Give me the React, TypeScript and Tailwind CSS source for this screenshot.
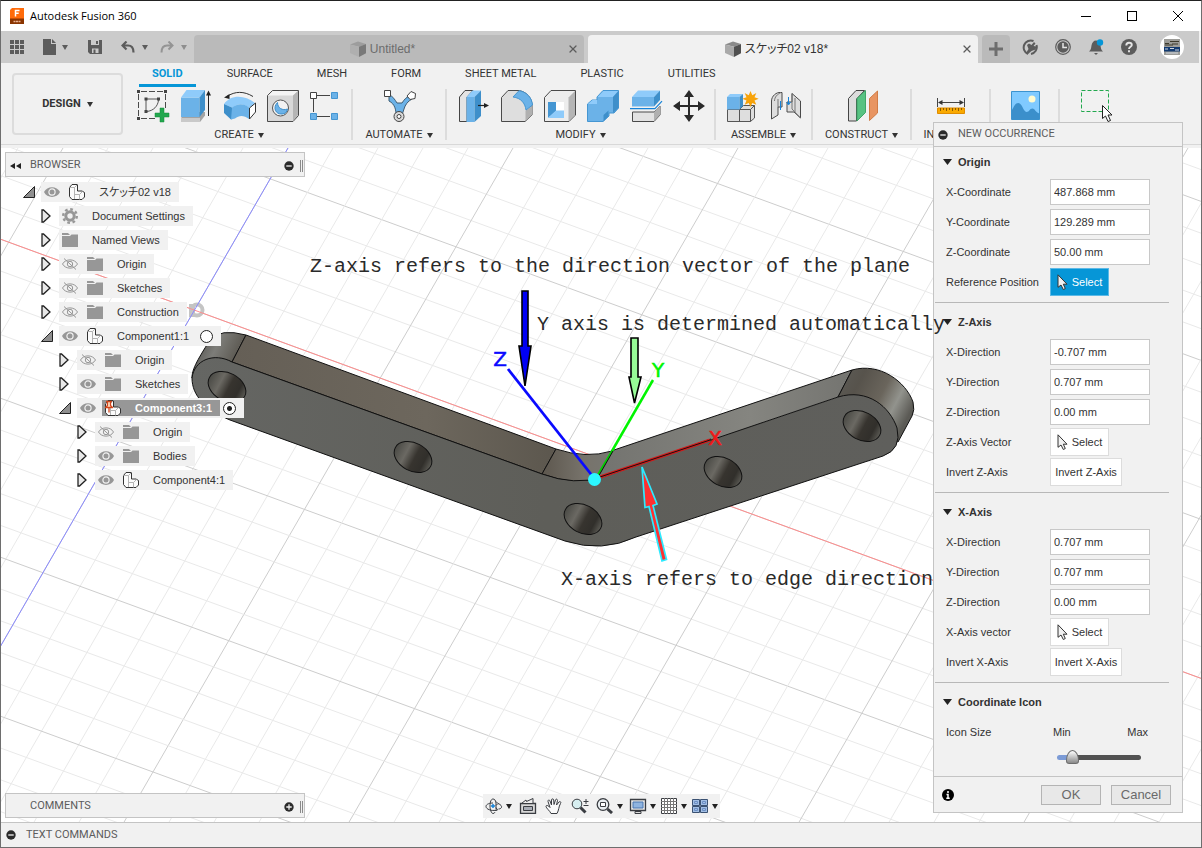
import type { ReactNode } from "react";
import { X } from "lucide-react";
import clsx from "clsx";

interface TreeNode {
  label: string;
  level: number;
  icon: "component" | "pinned" | "folder" | "gear";
  open?: boolean;
  eye?: "on" | "off";
  radio?: "on" | "off";
  selected?: boolean;
}

interface FieldProps {
  id: string;
  label: string;
  value: string;
}

const tree: TreeNode[] = [
  { label: "スケッチ02 v18", level: 0, icon: "component", open: true, eye: "on" },
  { label: "Document Settings", level: 1, icon: "gear" },
  { label: "Named Views", level: 1, icon: "folder" },
  { label: "Origin", level: 1, icon: "folder", eye: "off" },
  { label: "Sketches", level: 1, icon: "folder", eye: "off" },
  { label: "Construction", level: 1, icon: "folder", eye: "off" },
  { label: "Component1:1", level: 1, icon: "component", open: true, eye: "on", radio: "off" },
  { label: "Origin", level: 2, icon: "folder", eye: "off" },
  { label: "Sketches", level: 2, icon: "folder", eye: "on" },
  { label: "Component3:1", level: 2, icon: "pinned", open: true, eye: "on", radio: "on", selected: true },
  { label: "Origin", level: 3, icon: "folder", eye: "off" },
  { label: "Bodies", level: 3, icon: "folder", eye: "on" },
  { label: "Component4:1", level: 3, icon: "component", eye: "on" },
];

const levelPadding = ["pl-[18px]", "pl-9", "pl-[54px]", "pl-[72px]"];

const ribbonTabs = ["SOLID", "SURFACE", "MESH", "FORM", "SHEET METAL", "PLASTIC", "UTILITIES"];

function Caret({ className }: { className?: string }) {
  return (
    <svg viewBox="0 0 6 5" className={clsx("h-[5px] w-1.5 shrink-0", className)} fill="currentColor">
      <path d="M0 0h6L3 5z" />
    </svg>
  );
}

function MinusDot() {
  return (
    <svg viewBox="0 0 10 10" className="size-2.5 shrink-0">
      <circle cx="5" cy="5" r="4.7" fill="#2b2b2b" />
      <path d="M2.3 5h5.4" stroke="#f1f1f1" strokeWidth="1.3" />
    </svg>
  );
}

function PlusDot() {
  return (
    <svg viewBox="0 0 10 10" className="size-2.5 shrink-0">
      <circle cx="5" cy="5" r="4.7" fill="#2b2b2b" />
      <path d="M2.3 5h5.4M5 2.3v5.4" stroke="#f1f1f1" strokeWidth="1.3" />
    </svg>
  );
}

function CubeLogo({ dim }: { dim?: boolean }) {
  return (
    <svg viewBox="0 0 16 16" className={clsx("size-4 shrink-0", dim && "opacity-60")}>
      <path d="M0 3.5 8 .6l8 2.4-7 2.8z" fill="#8a8a8a" />
      <path d="M0 3.5 9 5.8V16L0 12z" fill="#a9a9a9" />
      <path d="m9 5.8 7-2.8v9.2L9 16z" fill="#4f4f4f" />
    </svg>
  );
}

/* ---------- ribbon icons, all on a 32 x 32 board ---------- */

function Tool({ name, children }: { name: string; children: ReactNode }) {
  return (
    <button type="button" aria-label={name} className="size-8 shrink-0">
      <svg viewBox="0 0 32 32" className="size-8 overflow-visible" fill="none" strokeLinejoin="round">
        {children}
      </svg>
    </button>
  );
}

function SketchTool() {
  return (
    <Tool name="Create Sketch">
      <path d="M4 1.5h23M1.5 4v23M28.5 4v14M4 28.5h14" stroke="#4a4a4a" strokeDasharray="6 2" />
      <path d="M9 9h12M9 9v12M21.5 10c-.5 6-5 11-12 11.5" stroke="#555" />
      <path d="M0 0h3v3H0zM27 0h3v3h-3zM0 27h3v3H0zM7.5 7.5h3v3h-3zM20 7.5h3v3h-3zM7.5 20h3v3h-3z" fill="#444" />
      <path d="M23 18h4v5h5v4h-5v5h-4v-5h-5v-4h5z" fill="#22a84e" stroke="#158a3b" strokeWidth=".5" />
    </Tool>
  );
}

function ExtrudeTool() {
  return (
    <Tool name="Extrude">
      <path d="m1 28 5.5-6H25v3.5L20 32H1z" fill="#a3a3a3" />
      <path d="M1 28h19v4H1z" fill="#c9c9c9" />
      <path d="M1 7.5h18.5V27H1z" fill="#6bb2e8" />
      <path d="M1 7.5 6.5 0H25l-5.5 7.5z" fill="#8fcbfa" />
      <path d="M19.5 7.5 25 0v20l-5.5 7z" fill="#3e8fca" />
      <path d="M28.5 26V3" stroke="#222" />
      <path d="M26 5.5 28.5.5 31 5.5z" fill="#222" />
    </Tool>
  );
}

function RevolveTool() {
  return (
    <Tool name="Revolve">
      <path d="M1 14C7 5 21 4 32 13l-6 5C20 13 14 13 10 18z" fill="#8fcbfa" />
      <path d="M1 14v9l7 6.5 2-1V18z" fill="#3e8fca" />
      <path d="M9 18c5-4.5 11-5 17-.5V29c-5-4-10-4-14-.5L8 29.5z" fill="#6bb2e8" />
      <path d="m26.5 18 6-5v9l-6 7z" fill="#fff" stroke="#333" />
      <path d="M4 6.500C12 1 21 1 30 6.5" stroke="#333" />
      <path d="M1 7.500 6.500 4v5z" fill="#222" />
    </Tool>
  );
}

function HoleTool() {
  return (
    <Tool name="Hole">
      <path d="M1.5 5.500 6.500.5h26v25l-5.500 6H1.5z" fill="#d8d8d8" stroke="#4a4a4a" />
      <path d="m2 5.500 5-4.500h25l-5 4.500z" fill="#f4f4f4" />
      <path d="M27 5.500 32 1v24l-5 6z" fill="#b5b5b5" />
      <circle cx="14.5" cy="18" r="8" fill="#f2f2f2" stroke="#555" />
      <path d="M11.5 12.500c-5 5-2 12 4.500 11.500 3 0 5-2 5.500-5-5 2-10-1-10-6.500z" fill="#6bb2e8" stroke="#3e8fca" />
    </Tool>
  );
}

function PatternTool() {
  return (
    <Tool name="Pattern">
      <path d="M8 5.500h13M4.500 9v13M8 26.500h13" stroke="#444" />
      <path d="M1.5 2.500h6v6h-6z" fill="#fff" stroke="#444" />
      <path d="M22.5 2.500h6v6h-6zM1.5 23.500h6v6h-6zM22.5 23.500h6v6h-6z" fill="#6bb2e8" stroke="#4596d2" />
    </Tool>
  );
}

function AutomateTool() {
  return (
    <Tool name="Automated Modeling">
      <path
        d="M6 5c4 1 6 5 8 8h5c2-3 4-6 8-7l2 3c-4 2-7 6-8 10l-2 6h-6c0-5-1-11-7-14z"
        fill="#6bb2e8"
        stroke="#3f5d73"
      />
      <path d="M1.5.5h6v6h-6z" fill="#fff" stroke="#444" />
      <path d="m24 6 4-4.500 4.500 2-.5 5-5 1z" fill="#fff" stroke="#444" />
      <circle cx="16" cy="26.5" r="5" fill="#d9d9d9" stroke="#444" />
      <circle cx="16" cy="26.5" r="2" fill="#fff" stroke="#444" />
    </Tool>
  );
}

function PressPullTool() {
  return (
    <Tool name="Press Pull">
      <path d="M2.5 7 8 .5h8L10 7v24.500H2.5z" fill="#e4e4e4" stroke="#444" />
      <path d="M9.5 7h8v25h-8z" fill="#6bb2e8" />
      <path d="m9.5 7 6-6.500h8.500L17.5 7z" fill="#8fcbfa" />
      <path d="M17.5 7 24 .5V26l-6.500 6z" fill="#3e8fca" />
      <path d="M21 15.500h7" stroke="#222" strokeWidth="1.2" />
      <path d="m27 13 5 2.500-5 2.500z" fill="#222" />
    </Tool>
  );
}

function FilletTool() {
  return (
    <Tool name="Fillet">
      <path d="M1.5 7.500 8 .5h10C26 1 32 8 32 15v10l-7 6.500H1.5z" fill="#dedede" stroke="#4a4a4a" />
      <path d="M25.5 20.500 32 16v9l-6.500 6z" fill="#b0b0b0" />
      <path d="M13 7 19 .7C27 2 32 8 32.500 15L26 20C25 13 21 8 13 7z" fill="#6bb2e8" stroke="#4596d2" />
    </Tool>
  );
}

function ShellTool() {
  return (
    <Tool name="Shell">
      <path d="M1.5 7.500 8 .5h24.500V25L26 31.500H1.5z" fill="#ededed" stroke="#4a4a4a" />
      <path d="M25.5 7.500 32 1v24l-6.500 6z" fill="#b5b5b5" />
      <path d="M5 12h16v16H5z" fill="#fff" />
      <path d="M5 12h8v9l-8 7z" fill="#4596d2" />
      <path d="m5 28 8-7.500h8V28z" fill="#8fcbfa" />
    </Tool>
  );
}

function CombineTool() {
  return (
    <Tool name="Combine">
      <path d="M1.5 14 6 10h5V7l6-6.500h15.500V18L28 23h-5v3l-6 5.500H1.5z" fill="#6bb2e8" stroke="#4596d2" />
      <path d="m11.5 7 6-6h14.500L27 7zM2 14l4.500-4H11v4z" fill="#8fcbfa" />
      <path d="m27 7 5.500-6v17L27 23zM17.5 25l5-4.500V26l-5 5.500z" fill="#3e8fca" />
    </Tool>
  );
}

function SplitTool() {
  return (
    <Tool name="Split Body">
      <path d="M3.5 22H25l6-6v9l-6 6.500H3.5z" fill="#e2e2e2" stroke="#4a4a4a" />
      <path d="m25 22 6-6v9l-6 6z" fill="#b0b0b0" />
      <path d="M3 7h22v9.500H3z" fill="#6bb2e8" />
      <path d="m3 7 6-6.500h22L25 7z" fill="#8fcbfa" />
      <path d="m25 7 6-6.500V10l-6 6.500z" fill="#3e8fca" />
      <path d="M1 18.700h25l7-7.500" stroke="#f1f1f1" strokeWidth="3" />
      <path d="M1 18.700h25l7-7.500" stroke="#1683d8" strokeWidth="1.2" />
    </Tool>
  );
}

function MoveTool() {
  return (
    <Tool name="Move">
      <path d="M17 3v26M4 16h26" stroke="#2a2a2a" strokeWidth="2" />
      <path d="m17 0 5 7H12zM17 32l5-7H12zM1 16l7-5v10zM33 16l-7-5v10z" fill="#2a2a2a" />
    </Tool>
  );
}

function NewComponentTool() {
  return (
    <Tool name="New Component">
      <path d="M1.5 19.500h12l4-4h11V28l-4 3.500h-23z" fill="#dedede" stroke="#555" />
      <path d="M13.5 19.500v12M24.5 19.500v12M13.5 19.500h11l4-4" stroke="#555" />
      <path d="M1 7h12.500v12.500H1z" fill="#6bb2e8" />
      <path d="m1 7 3-3h13l-3.500 3z" fill="#8fcbfa" />
      <path d="M13.5 7 17 4v12l-3.500 3.500z" fill="#3e8fca" />
      <path
        d="m24.500 1 1.800 4.200 4-2.200-1.800 4.200 4.200 1.500-4.200 1.800 1.800 4.200-4-1.800-1.800 4.200-1.800-4.200-4 1.800 1.800-4.200-4.200-1.800 4.200-1.500-1.800-4.200 4 2.200z"
        fill="#f7a30a"
      />
    </Tool>
  );
}

function JointTool() {
  return (
    <Tool name="Joint">
      <path d="M2.5 11c0-5 5-9 9-8.500h1.500V17h-4v8l-6.500 4z" fill="#dedede" stroke="#4a4a4a" />
      <path d="M5.5 11c0-4 3-7 6-8M9 17V9" stroke="#777" />
      <path d="M23 3.500 31.500 11v17l-6.500-6h-7V12h5z" fill="#dedede" stroke="#4a4a4a" />
      <path d="M23 3.500V19l8.500 9M26 8v14" stroke="#777" />
      <path d="M11.5 11v9M19.500 7v7M17.500 12l2 3 2-3" stroke="#1683d8" />
    </Tool>
  );
}

function ConstructTool() {
  return (
    <Tool name="Offset Plane">
      <path d="M2.5 8.500 10 .5h8.500L10.5 9v22h-8z" fill="#dcdcdc" stroke="#444" />
      <path d="m11 8.500 8.500-8v22l-8.500 8.500z" fill="#57c282" stroke="#3fa668" />
      <path d="M23.5 8.500 31.500 1v22l-8 7.500z" fill="#e89562" stroke="#d07c46" />
    </Tool>
  );
}

function MeasureTool() {
  return (
    <Tool name="Measure">
      <path d="M2.5 8v9M29.5 8v9M4 12.500h24" stroke="#444" />
      <path d="m3 12.500 4.500-2.500v5zM29 12.500 24.500 10v5z" fill="#333" />
      <path d="M2.5 18h27v5.500h-27z" fill="#f9a900" stroke="#e08c00" />
      <path d="M5.500 18v3M8.500 18v2M11.500 18v3M14.500 18v2M17.500 18v3M20.500 18v2M23.500 18v3M26.500 18v2" stroke="#8a5a00" />
    </Tool>
  );
}

function InsertTool() {
  return (
    <Tool name="Insert">
      <path d="M2.5 1.500h28v28h-28z" fill="#80caff" stroke="#3b93cf" />
      <path d="M3 20c2-3 3-7 6.500-7 3.500 0 5 9 8 9s3-3.500 6-3.500c2.500 0 3 4 7 5v6H3z" fill="#3b8fcb" />
      <circle cx="23" cy="9" r="3.5" fill="#fffbd0" />
    </Tool>
  );
}

function SelectTool() {
  return (
    <Tool name="Select">
      <path d="M1.5.5h27v21h-27z" stroke="#22a84e" strokeDasharray="4 2" />
      <path d="M22.5 15.500v13l3-2.500 2.500 5.500 2.500-1-2.500-5.500h4z" fill="#fff" stroke="#222" />
    </Tool>
  );
}

function RibbonGroup({ label, width, children }: { label?: string; width: string; children: ReactNode }) {
  return (
    <div className={clsx("flex h-[51px] shrink-0 flex-col items-center border-r-2 border-[#dcdcdc] pt-px", width)}>
      <div className="flex gap-[11px]">{children}</div>
      {label && (
        <button type="button" className="mt-2 flex items-center gap-1 leading-[10px]">
          {label}
          <Caret />
        </button>
      )}
    </div>
  );
}

function TitleBar() {
  return (
    <header className="flex h-[30px] items-center bg-white pl-[9px] text-black">
      <svg viewBox="0 0 14 16" className="h-4 w-3.5">
        <path d="M2 0h12v12.500H0V2z" fill="#ff6b0a" />
        <path d="M0 10.500h14V16H0z" fill="#8a3400" />
        <path d="M5.500 8.500V2.500h4M5.500 5.300h3.200" stroke="#fff" strokeWidth="1.5" fill="none" />
        <path d="M3.500 13.500h7" stroke="#e7b090" strokeWidth="1.5" strokeDasharray="2 .5" />
      </svg>
      <h1 className="ml-1.5 flex-1 font-['Open_Sans',sans-serif] text-[11px]">Autodesk Fusion 360</h1>
      <button type="button" aria-label="Minimize" className="flex h-full w-[46px] items-center justify-center">
        <span className="h-px w-2.5 bg-black" />
      </button>
      <button type="button" aria-label="Maximize" className="flex h-full w-[46px] items-center justify-center">
        <span className="size-2.5 border border-black" />
      </button>
      <button type="button" aria-label="Close" className="flex h-full w-[46px] items-center justify-center">
        <svg viewBox="0 0 10 10" className="size-2.5" stroke="#000">
          <path d="m0 0 10 10M10 0 0 10" />
        </svg>
      </button>
    </header>
  );
}

function TabBar() {
  return (
    <div className="mr-0.5 flex h-8 bg-[#cbcbcb] text-[#5c5c5c]">
      <div className="flex w-[193px] items-center pl-[9px]">
        <button type="button" aria-label="Data Panel">
          <svg viewBox="0 0 14 14" className="size-3.5" fill="#5c5c5c">
            <path d="M0 0h4v4H0zM5 0h4v4H5zM10 0h4v4h-4zM0 5h4v4H0zM5 5h4v4H5zM10 5h4v4h-4zM0 10h4v4H0zM5 10h4v4H5zM10 10h4v4h-4z" />
          </svg>
        </button>
        <button type="button" aria-label="File" className="ml-[19px] flex items-center gap-1.5">
          <svg viewBox="0 0 13 16" className="h-4 w-[13px]" fill="#5c5c5c">
            <path d="M0 0h8v5h5v11H0zM9 0l4 4H9z" />
          </svg>
          <Caret />
        </button>
        <button type="button" aria-label="Save" className="ml-5">
          <svg viewBox="0 0 14 14" className="size-3.5">
            <path d="M0 0h14v14H2l-2-2z" fill="#5c5c5c" />
            <path d="M3 0h8v5H3zM4 8.500h6.500V13H4z" fill="#cbcbcb" />
            <path d="M8 1h2v3H8zM5.500 9.500h2V13h-2z" fill="#5c5c5c" />
          </svg>
        </button>
        <button type="button" aria-label="Undo" className="ml-[19px] flex items-center gap-[7px]">
          <svg viewBox="0 0 14 12" className="h-3 w-3.5" fill="none" stroke="#5c5c5c" strokeWidth="2.2">
            <path d="M5.500.5 1.500 4.500l4 4M2 4.500h5c4 0 5.500 2.500 5.500 7" />
          </svg>
          <Caret />
        </button>
        <button type="button" aria-label="Redo" className="ml-3 flex items-center gap-[7px] text-[#8e8e8e]">
          <svg viewBox="0 0 14 12" className="h-3 w-3.5" fill="none" stroke="#949494" strokeWidth="2">
            <path d="m8.500.5 4 4-4 4M12 4.500H7C3 4.500 1.500 7 1.500 11.500" />
          </svg>
          <Caret />
        </button>
      </div>
      <div role="tablist" className="mt-1 flex flex-1 gap-1 font-['Liberation_Sans','Noto_Sans_CJK_JP',sans-serif] text-xs">
        <div className="flex flex-1 items-center rounded-t bg-[#bababa]">
          <button type="button" role="tab" className="flex flex-1 items-center justify-center gap-1 pl-1 text-[#6c6c6c]">
            <CubeLogo dim />
            Untitled*
          </button>
          <button type="button" aria-label="Close Untitled" className="mr-[5px]">
            <X className="size-3" strokeWidth={2.5} />
          </button>
        </div>
        <div className="flex flex-1 items-center rounded-t bg-[#f1f1f1]">
          <button
            type="button"
            role="tab"
            aria-selected="true"
            className="flex flex-1 items-center justify-center gap-1 pl-1 text-[#333] [font-feature-settings:'palt']"
          >
            <CubeLogo />
            スケッチ02 v18*
          </button>
          <button type="button" aria-label="Close document" className="mr-[5px]">
            <X className="size-3" strokeWidth={2.5} />
          </button>
        </div>
      </div>
      <button type="button" aria-label="New Design" className="mt-1 ml-1 flex w-7 items-center justify-center rounded-t bg-[#bababa]">
        <svg viewBox="0 0 14 14" className="size-3.5" stroke="#6e6e6e" strokeWidth="3">
          <path d="M7 0v14M0 7h14" />
        </svg>
      </button>
      <div className="flex w-[189px] items-center gap-[17px] pl-3">
        <button type="button" aria-label="Extensions">
          <svg viewBox="0 0 16 16" className="size-4" fill="none">
            <path d="M6 15A7 7 0 1 1 11.500 2M14.500 6A7 7 0 0 1 9 14.900" stroke="#5c5c5c" strokeWidth="2" />
            <path d="m5 6 2-1.500 2.500 1.500L12 3l1.500 1.500L11.500 7l3 .5-1 3-4 1.500-3.500 3-2-1 2.500-4z" fill="#5c5c5c" />
          </svg>
        </button>
        <button type="button" aria-label="Job Status">
          <svg viewBox="0 0 16 16" className="size-4">
            <circle cx="8" cy="8" r="7.3" fill="#cbcbcb" stroke="#5c5c5c" strokeWidth="1.2" />
            <circle cx="8" cy="8" r="5.7" fill="#5c5c5c" />
            <path d="M8 4v4.500h4" stroke="#e6e6e6" strokeWidth="1.5" fill="none" />
          </svg>
        </button>
        <button type="button" aria-label="Notifications">
          <svg viewBox="0 0 16 16" className="size-4">
            <path d="M1 12.500c2-1.500 2-3 2.500-6C4 3.500 5.500 1.500 8 1.500s4 2 4.500 5c.5 3 .5 4.500 2.500 6zM6 14h4l-2 2z" fill="#5c5c5c" />
            <circle cx="12" cy="3.5" r="3.2" fill="#0696d7" />
          </svg>
        </button>
        <button type="button" aria-label="Help">
          <svg viewBox="0 0 16 16" className="size-4">
            <circle cx="8" cy="8" r="8" fill="#5c5c5c" />
            <path d="M5.300 6.500C5.300 4.500 6.500 3.700 8 3.700s2.800.8 2.800 2.300C10.800 7.800 8 7.800 8 10M8 11.300v2" stroke="#e6e6e6" strokeWidth="1.9" fill="none" />
          </svg>
        </button>
        <button type="button" aria-label="Account" className="ml-1.5">
          <svg viewBox="0 0 24 24" className="size-6">
            <circle cx="12" cy="12" r="12" fill="#fff" />
            <path d="M4 4h16v16H4z" fill="#9c9c98" />
            <path d="M4 12h16v4.500H4z" fill="#123a70" />
            <path d="M5 8.500h4M10 6.500h9M12 9h6M5 10h8" stroke="#3d3a2c" />
            <path d="M5 14h3M10 13.500h4M15 15h4M6 18h12" stroke="#cfd6df" />
          </svg>
        </button>
      </div>
    </div>
  );
}

function Ribbon() {
  return (
    <section className="flex h-[82px] shrink-0 overflow-hidden border-b border-[#d8d8d8] font-['Roboto',sans-serif] text-[11px] text-[#333]">
      <button
        type="button"
        className="mt-2.5 ml-[11px] flex h-[62px] w-[111px] shrink-0 items-center justify-center gap-1.5 rounded border-2 border-[#dcdcdc] font-bold"
      >
        DESIGN
        <Caret />
      </button>
      <div className="ml-4 flex min-w-0 flex-1 flex-col">
        <nav className="flex h-6 gap-[18px]">
          {ribbonTabs.map((tab, i) => (
            <button
              key={tab}
              type="button"
              className={clsx(
                "shrink-0 border-b-3 px-[13px] leading-[22px]",
                i === 0 ? "border-[#0696d7] font-bold text-[#0696d7]" : "border-transparent",
              )}
            >
              {tab}
            </button>
          ))}
        </nav>
        <div className="mt-0.5 flex">
          <RibbonGroup label="CREATE" width="w-[214px] pr-3">
            <SketchTool />
            <ExtrudeTool />
            <RevolveTool />
            <HoleTool />
            <PatternTool />
          </RibbonGroup>
          <RibbonGroup label="AUTOMATE" width="w-[94px]">
            <AutomateTool />
          </RibbonGroup>
          <RibbonGroup label="MODIFY" width="w-[269px]">
            <PressPullTool />
            <FilletTool />
            <ShellTool />
            <CombineTool />
            <SplitTool />
            <MoveTool />
          </RibbonGroup>
          <RibbonGroup label="ASSEMBLE" width="w-[97px]">
            <NewComponentTool />
            <JointTool />
          </RibbonGroup>
          <RibbonGroup label="CONSTRUCT" width="w-[99px]">
            <ConstructTool />
          </RibbonGroup>
          <RibbonGroup label="INSPECT" width="w-[79px]">
            <MeasureTool />
          </RibbonGroup>
          <RibbonGroup width="w-[69px]">
            <InsertTool />
          </RibbonGroup>
          <RibbonGroup width="w-[73px] border-transparent">
            <SelectTool />
          </RibbonGroup>
        </div>
      </div>
    </section>
  );
}

/* ---------- browser ---------- */

function TreeIcon({ icon }: { icon: TreeNode["icon"] }) {
  if (icon === "folder") {
    return (
      <svg viewBox="0 0 16 14" className="h-3.5 w-4" fill="#979797">
        <path d="M0 0h6l2 2h-8zM0 3h8l1.500-1.500H16V14H0z" />
      </svg>
    );
  }
  if (icon === "gear") {
    return (
      <svg viewBox="0 0 16 16" className="size-4">
        <circle cx="8" cy="8" r="6.8" fill="none" stroke="#979797" strokeWidth="2.4" strokeDasharray="2.7 2.64" />
        <circle cx="8" cy="8" r="4.2" fill="none" stroke="#979797" strokeWidth="3" />
      </svg>
    );
  }
  return (
    <svg viewBox="0 0 16 16" className="size-4" fill="#fbfbfb" stroke="#333" strokeLinejoin="round">
      <path d="M.5 3.500 3 .5h5.500V7H13l2.500 1.500V13L13 15.500H3L.5 12.500z" />
      <path d="M.5 3.500h5L8.500.5M5.500 3.500V15M5.500 10.500h5l3-3M10.500 10.500v5" fill="none" stroke="#b3b3b3" />
      {icon === "pinned" && <path d="M1 1.500h6M2.500 1.500v4l-2 2h7l-2-2v-4M4 7.500v5" fill="#ffe2c4" stroke="#d2451b" strokeWidth="1.3" />}
    </svg>
  );
}

function Eye({ state }: { state: "on" | "off" }) {
  if (state === "on") {
    return (
      <svg viewBox="0 0 16 12" className="h-3 w-4">
        <path d="M0 6c3-6.500 13-6.500 16 0-3 6.500-13 6.500-16 0z" fill="#979797" />
        <circle cx="8" cy="6" r="3.1" fill="none" stroke="#f1f1f1" strokeWidth="1.2" />
      </svg>
    );
  }
  return (
    <svg viewBox="0 0 16 12" className="h-3 w-4" fill="none" stroke="#979797">
      <path d="M.5 6c3-5.500 12-5.500 15 0-3 5.500-12 5.500-15 0z" />
      <circle cx="8" cy="6" r="2.7" />
      <path d="m2 .5 12 11" />
    </svg>
  );
}

function TreeRow({ node }: { node: TreeNode }) {
  return (
    <li className={clsx("flex h-6 items-center", levelPadding[node.level])}>
      <button type="button" aria-label={node.open ? "Collapse" : "Expand"} className="w-[18px] shrink-0">
        {node.open ? (
          <svg viewBox="0 0 12 12" className="size-3">
            <path d="M11.500.5v11H.5z" fill="#8f8f8f" stroke="#222" />
          </svg>
        ) : (
          <svg viewBox="0 0 10 14" className="h-3.5 w-2.5">
            <path d="M1 1h1.500L9 7l-6.500 6H1z" fill="#e8e8e8" stroke="#222" strokeWidth="1.3" />
          </svg>
        )}
      </button>
      <div className="flex h-5 items-center bg-[#f1f1f1] pr-2">
        {node.eye && (
          <span className="mr-[3px] flex w-[22px] justify-center">
            <Eye state={node.eye} />
          </span>
        )}
        <span className={clsx("flex items-center", node.radio && "pr-2", node.selected && "bg-[#979797] font-bold text-white")}>
          <span className="mr-[11px] flex w-[22px] justify-center">
            <TreeIcon icon={node.icon} />
          </span>
          <span className="leading-4 [font-feature-settings:'palt']">{node.label}</span>
        </span>
        {node.radio && (
          <input
            type="radio"
            name="active-component"
            aria-label={`Activate ${node.label}`}
            defaultChecked={node.radio === "on"}
            className="ml-[3px] size-[13px] appearance-none rounded-full border border-[#222] bg-white checked:bg-[radial-gradient(circle,#222_2px,#fff_3px)]"
          />
        )}
      </div>
    </li>
  );
}

function PanelBar({ title, collapsed }: { title: string; collapsed?: boolean }) {
  return (
    <div className="flex h-[25px] w-[300px] items-center border border-[#c4c4c4] bg-[#f1f1f1] pt-0.5 pl-1 font-['Roboto',sans-serif] text-[11px] text-[#5c5c5c]">
      <span className="w-5">
        {!collapsed && (
          <svg viewBox="0 0 11 6" className="h-1.5 w-[11px]" fill="#222">
            <path d="M5 0v6L0 3zM11 0v6L6 3z" />
          </svg>
        )}
      </span>
      <h2 className="flex-1">{title}</h2>
      <button type="button" aria-label={`Toggle ${title}`}>
        {collapsed ? <PlusDot /> : <MinusDot />}
      </button>
      <span className="mr-px ml-1.5 h-3 w-[3px] border-x border-[#8a8a8a]" />
    </div>
  );
}

/* ---------- model scene, in window coordinates ---------- */

const gridSteps = Array.from({ length: 70 }, (_, i) => i - 25);

const holes = [
  [227, 387],
  [413, 457],
  [583, 519],
  [723, 472],
  [862, 426],
];

function Scene() {
  return (
    <svg className="absolute inset-0 h-full w-full" aria-hidden="true">
      <defs>
        <linearGradient id="face" x1="0" y1="0" x2="1" y2="0">
          <stop offset="0" stopColor="#656663" />
          <stop offset=".5" stopColor="#5e5e59" />
          <stop offset="1" stopColor="#5f5f5c" />
        </linearGradient>
        <linearGradient id="endLeft" x1="0" y1="0" x2="1" y2=".4">
          <stop offset="0" stopColor="#42403c" />
          <stop offset=".5" stopColor="#7d7d79" />
          <stop offset="1" stopColor="#545048" />
        </linearGradient>
        <linearGradient id="topLeft" x1="0" y1="0" x2="1" y2="0">
          <stop offset="0" stopColor="#655f56" />
          <stop offset=".6" stopColor="#6d675d" />
          <stop offset="1" stopColor="#5c574e" />
        </linearGradient>
        <linearGradient id="bend" x1="0" y1="0" x2="1" y2="0">
          <stop offset="0" stopColor="#5d574e" />
          <stop offset=".6" stopColor="#77736b" />
          <stop offset="1" stopColor="#777772" />
        </linearGradient>
        <linearGradient id="topRight" x1="0" y1="0" x2="1" y2="0">
          <stop offset="0" stopColor="#73736f" />
          <stop offset=".6" stopColor="#858580" />
          <stop offset="1" stopColor="#747470" />
        </linearGradient>
        <linearGradient id="endRight" x1="0" y1="0" x2="1" y2=".5">
          <stop offset="0" stopColor="#5d5c57" />
          <stop offset=".3" stopColor="#57534c" />
          <stop offset=".6" stopColor="#6a655c" />
          <stop offset=".8" stopColor="#92938d" />
          <stop offset="1" stopColor="#5b5a55" />
        </linearGradient>
        <linearGradient id="hole" x1="0" y1="0" x2="1" y2="0">
          <stop offset="0" stopColor="#4a4a45" />
          <stop offset=".3" stopColor="#6b6963" />
          <stop offset=".55" stopColor="#37342f" />
          <stop offset=".8" stopColor="#312f2b" />
          <stop offset="1" stopColor="#5b5a54" />
        </linearGradient>
      </defs>
      <g transform="translate(-1 -148)" strokeLinejoin="round">
        {/* every fifth line of the work plane is a major one */}
        {gridSteps.map((i) => (
          <g key={i} stroke={i % 5 === 0 ? "#cdcdcd" : "#e9e9e9"}>
            <line x1={0} y1={239 + i * 31.8} x2={2400} y2={239 + i * 31.8 + 878} />
            <line x1={288 + i * 45} y1={148} x2={288 + i * 45 - 577} y2={1148} />
          </g>
        ))}
        <circle cx="197" cy="310" r="5.5" fill="#fff" stroke="#c4c4c4" strokeWidth="4" />
        <path d="M189 304h6v13h-6z" fill="#c4c4c4" />
        <line x1="0" y1="239" x2="2400" y2="1117" stroke="#ff8c8c" />
        <line x1="288" y1="148" x2="-289" y2="1148" stroke="#8a8aff" />

        <g stroke="#111" strokeWidth="1">
          <path d="M192 378C192 370 196 362 210 340Q220 328 246 335L232 362Q204 350 192 378z" fill="url(#endLeft)" />
          <path d="M246 335 556 449 542 474 232 362z" fill="url(#topLeft)" />
          <path d="M556 449Q586 459 612 451L597 479Q575 486 542 474z" fill="url(#bend)" />
          <path d="M611 451 852 370 838 397 597 479z" fill="url(#topRight)" stroke="none" />
          <path d="M611 451 852 370 838 397" fill="none" />
          <path d="M852 370C880 362 906 382 913 402Q915 410 912 416L898 442 838 397z" fill="url(#endRight)" />
          <path
            d="M232 362 542 474Q575 486 602 477L838 397C868 388 890 407 897 428Q902 449 883 456L636 537Q602 553 565 541L230 420C206 410 192 396 192 378C194 360 214 352 232 362z"
            fill="url(#face)"
          />
          {holes.map(([x, y]) => (
            <g key={x} transform={`rotate(28 ${x} ${y})`}>
              <ellipse cx={x} cy={y} rx="20" ry="14" fill="url(#hole)" />
            </g>
          ))}
        </g>
      </g>
    </svg>
  );
}

function Annotations() {
  return (
    <div className="pointer-events-none absolute -inset-px z-20 overflow-hidden font-['Liberation_Mono',monospace] text-xl leading-6 whitespace-nowrap text-[#2a2a2a]">
      <svg className="absolute inset-0 h-full w-full font-['DejaVu_Sans',sans-serif] text-xl" fill="none">
        <path d="m653 380-41 71" stroke="#00f400" strokeWidth="2.5" />
        <path d="m612 451-16 27" stroke="#00d000" strokeWidth="2" />
        <path d="m613 451-16 28M597 478l114-39" stroke="#111" />
        <path d="m597 478 113-38" stroke="#d81818" strokeWidth="3" />
        <path d="m597 478 113-38" stroke="#111" strokeWidth="1" />
        <path d="m508 369 86 109" stroke="#0a0aff" strokeWidth="2.8" />
        <circle cx="594.5" cy="479.5" r="6.5" fill="#2cf7ff" />
        <g textAnchor="middle" strokeWidth=".5">
          <text x="500" y="366" fill="#0a0aff" stroke="#0a0aff">
            Z
          </text>
          <text x="658" y="377" fill="#00f400" stroke="#00f400">
            Y
          </text>
          <text x="715" y="445" fill="#f01818" stroke="#f01818">
            X
          </text>
        </g>
        <path d="M522 291h6v55h3l-6 40-6-40h3z" fill="#0000f5" stroke="#000" strokeWidth="1.6" />
        <path d="M631 338h7v39h3l-6.500 26-5.500-26h2z" fill="#97fb97" stroke="#000" strokeWidth="1.6" />
        <path d="m642 467 15 37-4 1.500 13.500 54-4.500 1.500-13-54.500-4 1z" fill="#ff3030" stroke="#2ceaff" strokeWidth="1.7" />
      </svg>
      <p className="absolute top-[255px] left-[310px]">Z-axis refers to the direction vector of the plane</p>
      <p className="absolute top-[313px] left-[537px]">Y axis is determined automatically</p>
      <p className="absolute top-[568px] left-[561px]">X-axis refers to edge direction</p>
    </div>
  );
}

/* ---------- navigation bar ---------- */

function NavButton({ name, width, caret, children }: { name: string; width: string; caret?: boolean; children: ReactNode }) {
  return (
    <button type="button" aria-label={name} className={clsx("flex h-6 items-center justify-center gap-[3px] text-[#222]", width)}>
      <svg viewBox="0 0 18 16" className="h-4 w-[18px]" fill="none" stroke="#3a3d42">
        {children}
      </svg>
      {caret && <Caret />}
    </button>
  );
}

function NavBar() {
  return (
    <div className="flex h-6 self-end bg-[#f1f1f1]">
      <NavButton name="Orbit" width="w-8" caret>
        <path d="M12 12C6 13.500 1 11 1 8.500S5 5 8 5M13 5.500c3 1 4 3 3.500 4s-2 1.500-3 1.500M11 11V5c-.5-3-1.500-4-3-4-2 0-3 3-3 7s1.500 7.500 3 7.500 2-1.500 2-1.500M9.500 12.500l3-.5-1.500-2.500M11 3.500l2 2-2 2" />
        <path d="M8 6v4M6 8h4" stroke="#1683d8" strokeWidth="1.5" />
      </NavButton>
      <NavButton name="Look At" width="w-[26px]">
        <path d="M1.5 5.500h15v10h-15z" fill="#d9d9d9" strokeWidth="1.3" />
        <path d="M4.500 8.500h9v4h-9z" fill="#a8adb6" />
        <path d="m3 5 4-3 .5 1.500L14 .5V5" fill="#eee" />
      </NavButton>
      <NavButton name="Pan" width="w-[26px]">
        <path
          d="M6 15.500C5 13 1 10 1 8.500S3 7 5 9.500L3 3.500C2.500 2 4.500 1.500 5 3l1.500 4L6.500 2c0-1.500 2-1.500 2.200 0L9 6.500 10.500 2c.5-1.500 2-1 2 .5l-1 4.500L14 4c1-1 2.500 0 1.500 1.500C13.500 9 14 12 12 15.500z"
          fill="#fafafa"
        />
      </NavButton>
      <NavButton name="Zoom" width="w-[26px]">
        <circle cx="6" cy="6" r="4.8" fill="#d6eef0" />
        <path d="m9.500 9.500 5 5" strokeWidth="3" />
        <path d="M15 1v5M12.500 3.500h5M12.500 7.500h5" />
      </NavButton>
      <NavButton name="Fit" width="w-[34px]" caret>
        <circle cx="7" cy="6.5" r="5.8" fill="#e9eef1" strokeWidth="1.3" />
        <path d="M4.500 4.500h5v4h-5z" fill="#fff" />
        <path d="m11.500 11 4.500 4" strokeWidth="3" />
      </NavButton>
      <NavButton name="Display Settings" width="w-[31px]" caret>
        <path d="M1.5 1.500h15v11h-15z" fill="#e8e8e8" strokeWidth="1.3" />
        <path d="M4 4h10v6H4z" fill="#8fb4e0" stroke="#4a77b0" />
        <path d="M6 13.500h6v2H6z" fill="#ddd" />
      </NavButton>
      <NavButton name="Grid and Snaps" width="w-[31px]" caret>
        <path d="M1.500.5h15v15h-15z" fill="#fff" />
        <path d="M4.500 0v16M7.500 0v16M10.500 0v16M13.500 0v16M1 3.500h16M1 6.500h16M1 9.500h16M1 12.500h16" stroke="#777" />
      </NavButton>
      <NavButton name="Viewports" width="w-[31px]" caret>
        <path d="M1.500 1.500h7v6h-7zM9.500 1.500h7v6h-7zM1.500 8.500h7v6h-7zM9.500 8.500h7v6h-7z" fill="#a3bfe4" stroke="#3b5273" />
        <path d="M3.500 3.500h3v2h-3zM11.500 3.500h3v2h-3zM3.500 10.500h3v2h-3zM11.500 10.500h3v2h-3z" stroke="#6c8fc4" />
      </NavButton>
    </div>
  );
}

/* ---------- dialog ---------- */

function Section({ title, last, children }: { title: string; last?: boolean; children: ReactNode }) {
  return (
    <section className={clsx("mr-[13px] ml-px pt-1 first:pt-0", last ? "pb-[9px]" : "border-b border-[#b8b8b8] pb-[5px]")}>
      <h3 className="pl-2">
        <button type="button" className="flex h-[30px] items-center gap-1.5 font-bold">
          <svg viewBox="0 0 9 6" className="h-1.5 w-[9px]" fill="#222">
            <path d="M0 0h9L4.500 6z" />
          </svg>
          {title}
        </button>
      </h3>
      {children}
    </section>
  );
}

function Row({ htmlFor, label, children }: { htmlFor: string; label: string; children: ReactNode }) {
  return (
    <div className="flex h-[30px] items-center pl-[11px]">
      <label htmlFor={htmlFor} className="w-[104px] shrink-0">
        {label}
      </label>
      {children}
    </div>
  );
}

function Field({ id, label, value }: FieldProps) {
  return (
    <Row htmlFor={id} label={label}>
      <input id={id} defaultValue={value} className="h-[26px] w-[100px] border border-[#c8c8c8] bg-white px-[3px] outline-none" />
    </Row>
  );
}

function PickButton({ id, label, active }: { id: string; label: string; active?: boolean }) {
  return (
    <Row htmlFor={id} label={label}>
      <button
        id={id}
        type="button"
        className={clsx(
          "flex h-7 w-[59px] items-center justify-center gap-1 border",
          active ? "border-[#5cb9e6] bg-[#0696d7] text-white" : "border-[#dcdcdc] bg-white",
        )}
      >
        <svg viewBox="0 0 11 16" className="h-4 w-[11px]">
          <path d="M1 .8v12.500l3-2.300 2.300 4.500 2-1-2-4.300H10z" fill="#f1f1f1" stroke="#333" />
        </svg>
        Select
      </button>
    </Row>
  );
}

function InvertButton({ id, label }: { id: string; label: string }) {
  return (
    <Row htmlFor={id} label={label}>
      <button id={id} type="button" className="h-7 w-[72px] border border-[#dcdcdc] bg-white">
        {label}
      </button>
    </Row>
  );
}

function OccurrenceDialog() {
  return (
    <form
      aria-label="New Occurrence"
      className="absolute top-[121px] right-[18px] z-10 w-[250px] border border-[#c4c4c4] bg-[#f1f1f1] text-[11px] text-[#333]"
    >
      <div className="flex h-6 items-center gap-2.5 border-b border-[#c4c4c4] pl-1 font-['Roboto',sans-serif] text-[#5c5c5c]">
        <MinusDot />
        <h2>NEW OCCURRENCE</h2>
      </div>
      <div>
        <Section title="Origin">
          <Field id="origin-x" label="X-Coordinate" value="487.868 mm" />
          <Field id="origin-y" label="Y-Coordinate" value="129.289 mm" />
          <Field id="origin-z" label="Z-Coordinate" value="50.00 mm" />
          <PickButton id="origin-ref" label="Reference Position" active />
        </Section>
        <Section title="Z-Axis">
          <Field id="z-x" label="X-Direction" value="-0.707 mm" />
          <Field id="z-y" label="Y-Direction" value="0.707 mm" />
          <Field id="z-z" label="Z-Direction" value="0.00 mm" />
          <PickButton id="z-vector" label="Z-Axis Vector" />
          <InvertButton id="z-invert" label="Invert Z-Axis" />
        </Section>
        <Section title="X-Axis">
          <Field id="x-x" label="X-Direction" value="0.707 mm" />
          <Field id="x-y" label="Y-Direction" value="0.707 mm" />
          <Field id="x-z" label="Z-Direction" value="0.00 mm" />
          <PickButton id="x-vector" label="X-Axis vector" />
          <InvertButton id="x-invert" label="Invert X-Axis" />
        </Section>
        <Section title="Coordinate Icon" last>
          <Row htmlFor="icon-size" label="Icon Size">
            <span className="flex w-[102px] justify-between pr-1 pl-[3px]">
              <span>Min</span>
              <span>Max</span>
            </span>
          </Row>
          <div className="flex h-5 items-center pl-[122px]">
            <input
              id="icon-size"
              type="range"
              defaultValue={12}
              className="h-[5px] w-[84px] appearance-none rounded-full bg-[linear-gradient(90deg,#7c9bd6_12px,#525252_12px)] [&::-webkit-slider-thumb]:h-3.5 [&::-webkit-slider-thumb]:w-[13px] [&::-webkit-slider-thumb]:appearance-none [&::-webkit-slider-thumb]:rounded-[50%_50%_3px_3px/75%_75%_3px_3px] [&::-webkit-slider-thumb]:border [&::-webkit-slider-thumb]:border-[#6e6e6e] [&::-webkit-slider-thumb]:bg-[linear-gradient(#fff,#8a8a8a)]"
            />
          </div>
        </Section>
      </div>
      <div className="flex h-9 items-center border-t border-[#c4c4c4] pr-[11px] pl-2 text-[13px] text-[#6a6a6a]">
        <svg viewBox="0 0 12 12" className="size-3">
          <circle cx="6" cy="6" r="6" fill="#000" />
          <path d="M6 2v2M4.500 5.500H6V9M4.300 9.300h3.400" stroke="#fff" strokeWidth="1.5" fill="none" />
        </svg>
        <button type="button" className="ml-auto h-5 w-[60px] border border-[#b4b4b4] bg-[#e8e8e8] leading-4">
          OK
        </button>
        <button type="button" className="ml-2.5 h-5 w-[60px] border border-[#b4b4b4] bg-[#e8e8e8] leading-4">
          Cancel
        </button>
      </div>
    </form>
  );
}

export default function App() {
  return (
    <div className="relative flex min-h-screen flex-col border border-[#6e6e6e] border-t-[#222] bg-[#f1f1f1] font-['Liberation_Sans','Noto_Sans_CJK_JP',sans-serif]">
      <TitleBar />
      <TabBar />
      <Ribbon />
      <main className="relative mt-[3px] flex flex-1 flex-col justify-between bg-white">
        <Scene />
        <div className="relative self-start pt-1 pl-1">
          <PanelBar title="BROWSER" />
          <ul className="mt-[3px] text-[11px] text-[#333]">
            {tree.map((node, i) => (
              <TreeRow key={i} node={node} />
            ))}
          </ul>
        </div>
        <div className="relative mb-1 grid grid-cols-[1fr_auto_1fr] px-1">
          <PanelBar title="COMMENTS" collapsed />
          <NavBar />
        </div>
      </main>
      <footer className="flex h-[25px] items-center gap-2.5 border-t border-[#c4c4c4] pl-[5px] font-['Roboto',sans-serif] text-[11px] text-[#5c5c5c]">
        <MinusDot />
        TEXT COMMANDS
      </footer>
      <OccurrenceDialog />
      <Annotations />
    </div>
  );
}
